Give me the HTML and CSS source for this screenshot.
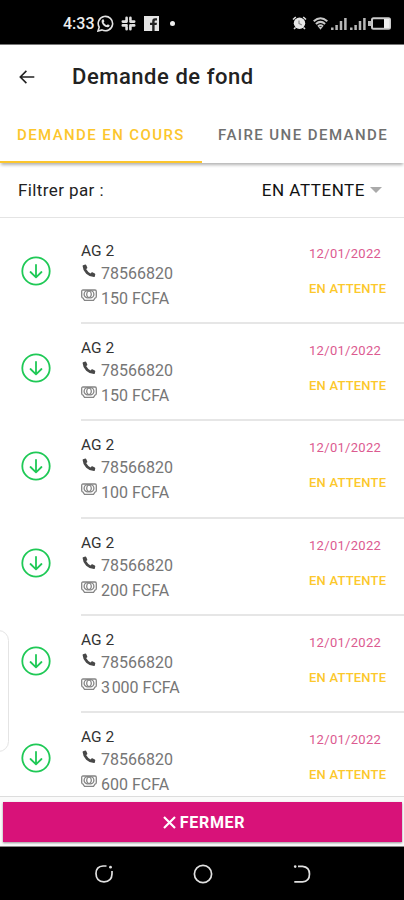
FILE: index.html
```html
<!DOCTYPE html>
<html lang="fr">
<head>
    <meta charset="UTF-8">
    <meta name="viewport" content="width=device-width, initial-scale=1.0">
    <title>Demande de fond</title>
    <link rel="stylesheet" href="styles.css">
</head>
<body>
    <!-- Shared icons -->
    <svg class="icon-defs" width="0" height="0">
        <symbol id="icon-down" viewBox="0 0 30 30">
            <g fill="none" stroke="#1fc956" stroke-linecap="round" stroke-linejoin="round">
                <circle cx="15" cy="15" r="13.7" stroke-width="1.8"/>
                <path d="M15 8.8V21.2M9.5 16L15 21.3L20.5 16" stroke-width="1.8"/>
            </g>
        </symbol>
        <symbol id="icon-phone" viewBox="0 0 14 14">
            <path d="M1.1 1.2L3.3 .5Q3.9 .4 4.2 1L5.3 3.4Q5.4 4 5 4.4L4.1 5.1Q5.7 8.1 8.6 9.4L9.4 8.5Q9.8 8.1 10.4 8.3L12.8 9.4Q13.4 9.7 13.3 10.3L12.8 12.4Q12.6 13 12 13Q7.5 12.9 4.2 9.7Q.8 6.3 .6 1.9Q.6 1.4 1.1 1.2Z" fill="#484848"/>
        </symbol>
        <symbol id="icon-money" viewBox="0 0 16 13">
            <g fill="none" stroke="#858585" stroke-width="1.3">
                <path d="M2 1H14Q15.3 1 15.3 2.5V7.5Q15.3 9 14 9.2L12.5 11.3H3.500L2 9.200Q.7 9 .7 7.500V2.500Q.7 1 2 1Z"/>
                <circle cx="6.700" cy="5.200" r="3.600"/>
                <circle cx="9.300" cy="5.200" r="3.600"/>
            </g>
        </symbol>
    </svg>

    <div class="status-bar">
        <div class="status-left">
            <span class="clock">4:33</span>
            <svg class="whatsapp" width="17" height="17" viewBox="0 0 17 17">
                <path d="M1 16L2.2 12.2A7.2 7.2 0 1 1 5 14.9Z" fill="none" stroke="#e2e2e2" stroke-width="1.6"/>
                <path d="M5.3 4.5L6.5 4.3L7.4 6.3L6.6 7.4Q7.7 9.5 9.8 10.2L10.8 9.2L12.7 10.2Q12.5 12 10.7 12.2Q8 12.1 6 9.9Q3.6 6.6 5.3 4.5Z" fill="#e2e2e2"/>
            </svg>
            <svg class="slack" width="15" height="15" viewBox="0 0 15 15" fill="none" stroke="#e0e0e0" stroke-width="2.6" stroke-linecap="round">
                <path d="M5.6 1.8V5.6M1.8 5.6H4M9.4 1.8V4M9.4 5.6H13.2M1.8 9.4H5.6M5.6 11V13.2M11 9.4H13.2M9.4 9.4V13.2"/>
            </svg>
            <svg class="facebook" width="15" height="15" viewBox="0 0 15 15">
                <path d="M0 0H15V15H0Z" fill="#e4e4e4"/>
                <path d="M8.2 15V9H6V6.7H8.2V5.2Q8.2 2.3 11 2.3H13V4.6H11.6Q10.6 4.6 10.6 5.6V6.7H13L12.6 9H10.6V15Z" fill="#222"/>
            </svg>
            <span class="dot"></span>
        </div>
        <div class="status-right">
            <svg class="alarm" width="15" height="14" viewBox="0 0 15 14">
                <path d="M1 3.5L3.8 1M14 3.5L11.2 1M3.500 11.5L2 13M11.5 11.5L13 13" stroke="#ddd" stroke-width="1.6"/>
                <circle cx="7.500" cy="7.300" r="5.700" fill="#e6e6e6"/>
                <path d="M7 4.500V7.500L9.800 9" fill="none" stroke="#888" stroke-width="1.200"/>
            </svg>
            <svg class="wifi" width="15" height="13" viewBox="0 0 15 13" fill="none" stroke="#c8c8c8" stroke-width="2">
                <path d="M.7 4.200Q7.500 -1.700 14.300 4.200M2.900 6.900Q7.500 2.900 12.100 6.900M5 9.400Q7.500 7.200 10 9.400"/>
                <path d="M5.500 10H9.500L7.500 12.800Z" fill="#c8c8c8" stroke="none"/>
            </svg>
            <svg class="signal" width="16" height="13" viewBox="0 0 16 13" stroke="#b8b8b8" stroke-width="2.500">
                <path d="M1.300 10.500V13M5.600 8V13M10 4V13M14.400 1V13"/>
            </svg>
            <svg class="signal" width="16" height="13" viewBox="0 0 16 13" stroke="#b8b8b8" stroke-width="2.500">
                <path d="M1.300 10.500V13M5.600 8V13M10 4V13M14.400 1V13"/>
            </svg>
            <svg class="battery" width="23" height="13" viewBox="0 0 23 13">
                <rect x="4" y="1.200" width="18" height="10.600" rx="1.500" fill="none" stroke="#ccc" stroke-width="2"/>
                <path d="M0 4H3.500V9H0Z" fill="#bbb"/>
                <path d="M16 2H21.500V11H16Z" fill="#f2f2f2"/>
            </svg>
        </div>
    </div>

    <div class="header">
        <svg class="back" width="16" height="14" viewBox="0 0 16 14" fill="none" stroke="#222" stroke-width="1.6">
            <path d="M15.3 7H1.5M7.4 .9L1.3 7L7.4 13.1"/>
        </svg>
        <h1 class="title">Demande de fond</h1>
    </div>

    <div class="tabs">
        <div class="tab active"><span class="tab-current">DEMANDE EN COURS</span></div>
        <div class="tab"><span class="tab-new">FAIRE UNE DEMANDE</span></div>
    </div>

    <div class="filter">
        <span class="filter-label">Filtrer par :</span>
        <span class="filter-value">EN ATTENTE</span>
        <span class="caret"></span>
    </div>

    <div class="list">
        <div class="side-handle"></div>
        <div class="row">
            <svg class="down"><use href="#icon-down"/></svg>
            <div class="row-content">
                <div class="info">
                    <div class="name">AG 2</div>
                    <div class="phone"><svg><use href="#icon-phone"/></svg><span>78566820</span></div>
                    <div class="amount"><svg><use href="#icon-money"/></svg><span>150 FCFA</span></div>
                </div>
                <div class="state">
                    <div class="date">12/01/2022</div>
                    <div class="status">EN ATTENTE</div>
                </div>
            </div>
        </div>
        <div class="row">
            <svg class="down"><use href="#icon-down"/></svg>
            <div class="row-content">
                <div class="info">
                    <div class="name">AG 2</div>
                    <div class="phone"><svg><use href="#icon-phone"/></svg><span>78566820</span></div>
                    <div class="amount"><svg><use href="#icon-money"/></svg><span>150 FCFA</span></div>
                </div>
                <div class="state">
                    <div class="date">12/01/2022</div>
                    <div class="status">EN ATTENTE</div>
                </div>
            </div>
        </div>
        <div class="row">
            <svg class="down"><use href="#icon-down"/></svg>
            <div class="row-content">
                <div class="info">
                    <div class="name">AG 2</div>
                    <div class="phone"><svg><use href="#icon-phone"/></svg><span>78566820</span></div>
                    <div class="amount"><svg><use href="#icon-money"/></svg><span>100 FCFA</span></div>
                </div>
                <div class="state">
                    <div class="date">12/01/2022</div>
                    <div class="status">EN ATTENTE</div>
                </div>
            </div>
        </div>
        <div class="row">
            <svg class="down"><use href="#icon-down"/></svg>
            <div class="row-content">
                <div class="info">
                    <div class="name">AG 2</div>
                    <div class="phone"><svg><use href="#icon-phone"/></svg><span>78566820</span></div>
                    <div class="amount"><svg><use href="#icon-money"/></svg><span>200 FCFA</span></div>
                </div>
                <div class="state">
                    <div class="date">12/01/2022</div>
                    <div class="status">EN ATTENTE</div>
                </div>
            </div>
        </div>
        <div class="row">
            <svg class="down"><use href="#icon-down"/></svg>
            <div class="row-content">
                <div class="info">
                    <div class="name">AG 2</div>
                    <div class="phone"><svg><use href="#icon-phone"/></svg><span>78566820</span></div>
                    <div class="amount"><svg><use href="#icon-money"/></svg><span>3&#8202;000 FCFA</span></div>
                </div>
                <div class="state">
                    <div class="date">12/01/2022</div>
                    <div class="status">EN ATTENTE</div>
                </div>
            </div>
        </div>
        <div class="row">
            <svg class="down"><use href="#icon-down"/></svg>
            <div class="row-content">
                <div class="info">
                    <div class="name">AG 2</div>
                    <div class="phone"><svg><use href="#icon-phone"/></svg><span>78566820</span></div>
                    <div class="amount"><svg><use href="#icon-money"/></svg><span>600 FCFA</span></div>
                </div>
                <div class="state">
                    <div class="date">12/01/2022</div>
                    <div class="status">EN ATTENTE</div>
                </div>
            </div>
        </div>
    </div>

    <div class="footer">
        <button class="close-button">
            <svg width="13" height="13" viewBox="0 0 13 13" stroke="#fff" stroke-width="2.2">
                <path d="M1 1L12 12M12 1L1 12"/>
            </svg>
            <span>FERMER</span>
        </button>
    </div>

    <div class="nav-bar">
        <svg width="20" height="20" viewBox="0 0 20 20" fill="none" stroke="#e0e0e0" stroke-width="1.7">
            <path d="M12.5 2H9Q2 2.500 2 9.500Q2 17.500 10 17.800Q17.800 17.500 18 10V7"/>
            <circle cx="16.5" cy="3.2" r="1.4" fill="#e0e0e0" stroke="none"/>
        </svg>
        <svg width="20" height="20" viewBox="0 0 20 20" fill="none" stroke="#e0e0e0" stroke-width="1.7">
            <circle cx="10" cy="10" r="8.6"/>
        </svg>
        <svg width="20" height="20" viewBox="0 0 20 20" fill="none" stroke="#e0e0e0" stroke-width="1.7">
            <path d="M6 2.3H10.5Q17.5 3 17.5 10Q17.5 17.5 10.5 17.8H2.3"/>
            <circle cx="3.2" cy="2.6" r="1.3" fill="#e0e0e0" stroke="none"/>
        </svg>
    </div>
</body>
</html>
```

FILE: styles.css
```css
* {
    box-sizing: border-box;
}

body {
    margin: 0;
    height: 900px;
    display: flex;
    flex-direction: column;
    font-family: Roboto, sans-serif;
    color: #222;
    background-color: #fff;
    overflow: hidden;
}

svg {
    display: block;
    flex-shrink: 0;
}

.icon-defs {
    position: absolute;
}

.status-bar {
    height: 45px;
    flex-shrink: 0;
    display: flex;
    justify-content: space-between;
    padding: 2px 13px 0 63px;
    background-color: #000;
    border-bottom: 1px solid #777;
}

.status-left, .status-right {
    display: flex;
    align-items: center;
}

.clock {
    width: 34px;
    font-size: 16px;
    font-weight: 500;
    color: #eee;
}

.slack {
    margin-left: 7px;
}

.facebook {
    margin-left: 8px;
}

.dot {
    width: 5px;
    height: 5px;
    margin-left: 11px;
    border-radius: 50%;
    background-color: #eee;
}

.wifi {
    margin: 0 3px 0 6px;
}

.signal {
    margin-right: 3px;
}

.battery {
    margin-left: -1px;
}

.header {
    height: 63px;
    flex-shrink: 0;
    display: flex;
    align-items: center;
    padding-left: 19px;
}

.title {
    margin: 0 0 0 37px;
    font-size: 22px;
    font-weight: 500;
    letter-spacing: 0.54px;
}

.tabs {
    height: 55px;
    flex-shrink: 0;
    display: flex;
    box-shadow: 0 3px 3px -1px rgba(0, 0, 0, 0.3);
}

.tab {
    width: 50%;
    padding-top: 18px;
    font-size: 15px;
    font-weight: 500;
    line-height: 18px;
    white-space: nowrap;
    color: #707070;
}

.tab-current {
    margin-left: 17px;
    letter-spacing: 1.4px;
}

.tab-new {
    margin-left: 16px;
    letter-spacing: 1.43px;
}

.active {
    color: #fcc62d;
    border-bottom: 2px solid #fcc62d;
}

.filter {
    height: 55px;
    flex-shrink: 0;
    display: flex;
    align-items: center;
    padding: 0 22px 0 18px;
    font-size: 17px;
    border-bottom: 1px solid #e4e4e4;
}

.filter-label {
    flex: 1;
    letter-spacing: 0.4px;
}

.filter-value {
    letter-spacing: 0.55px;
    color: #111;
}

.caret {
    margin-left: 5px;
    border: 6px solid transparent;
    border-top: 6px solid #aaa;
    border-bottom: 0;
}

.list {
    flex: 1;
    min-height: 0;
    padding-top: 8.5px;
    position: relative;
    overflow: hidden;
}

/* Edge panel handle over the list */
.side-handle {
    position: absolute;
    left: -12px;
    top: 412px;
    width: 21px;
    height: 122px;
    border: 1px solid #e4e4e4;
    border-radius: 12px;
}

.row {
    height: 97.4px;
    display: flex;
    padding-left: 21px;
}

.down {
    width: 30px;
    height: 30px;
    margin-top: 29.5px;
}

.row-content {
    flex: 1;
    display: flex;
    justify-content: space-between;
    margin-left: 30px;
    padding-right: 17px;
    border-bottom: 2px solid #e6e6e6;
}

.info {
    padding-top: 12px;
    font-size: 16px;
    color: #767676;
}

.name {
    height: 22px;
    line-height: 24px;
    font-size: 15.5px;
    color: #333;
}

.phone, .amount {
    display: flex;
    height: 25px;
    line-height: 25px;
}

.phone svg {
    width: 14px;
    height: 14px;
    margin: 3px 5px 0 1px;
}

.amount svg {
    width: 16px;
    height: 13px;
    margin: 3px 4px 0 0;
}

.state {
    width: 78px;
    padding-top: 17px;
    font-size: 13px;
    line-height: 20px;
    white-space: nowrap;
}

.date {
    letter-spacing: 0.3px;
    color: #dc5a90;
}

.status {
    margin-top: 15px;
    font-weight: 500;
    letter-spacing: 0.2px;
    color: #fcc82c;
}

.footer {
    height: 51px;
    flex-shrink: 0;
    padding: 5px 2px 4px 3px;
    border-top: 1px solid #ddd;
    border-bottom: 1px solid #888;
    background-color: #fafafa;
}

.close-button {
    width: 100%;
    height: 40px;
    display: flex;
    justify-content: center;
    align-items: center;
    gap: 4px;
    padding: 0;
    border: none;
    background-color: #d81279;
    box-shadow: 0 1px 2px rgba(0, 0, 0, 0.4);
    color: white;
    font-family: Roboto, sans-serif;
    font-size: 16px;
    font-weight: 700;
    letter-spacing: 0.7px;
}

.close-button svg {
    margin-left: 3px;
}

.nav-bar {
    height: 53px;
    flex-shrink: 0;
    display: flex;
    justify-content: center;
    align-items: center;
    gap: 79px;
    padding-left: 1px;
    background-color: #000;
}
```
